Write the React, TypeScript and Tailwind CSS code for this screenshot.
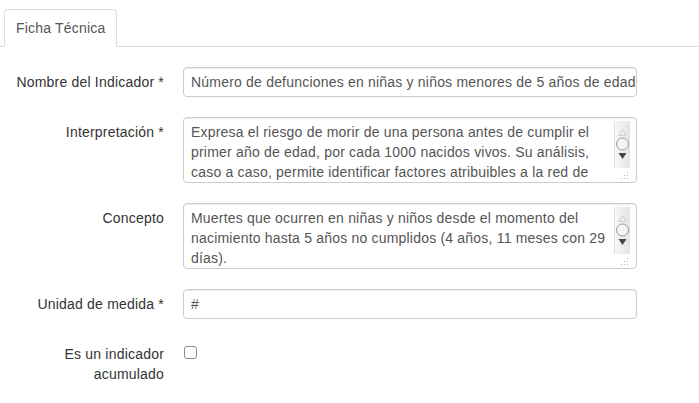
import type { ReactNode } from 'react'

const font = { fontFamily: '"Liberation Sans", Arial, sans-serif' }

function FakeScrollbar() {
  return (
    <>
      <div className="absolute top-[3px] right-[6px] w-[16px] h-[47px] border-l border-[#e2e2e2] border-r border-[#b9b9b9] bg-gradient-to-r from-[#f7f7f7] to-[#e6e6e6]">
        <svg width="15" height="47" viewBox="0 0 15 47" className="block">
          {/* up arrow (disabled) */}
          <path d="M3.5 14.5 L7.5 8.5 L11.5 14.5 Z" fill="#ececec" stroke="#cfcfcf" strokeWidth="1" />
          {/* thumb */}
          <circle cx="7.5" cy="23" r="6" fill="#f4f4f4" stroke="#9a9a9a" strokeWidth="1" />
          {/* down arrow */}
          <path d="M3.5 32 L11.5 32 L7.5 38 Z" fill="#444" />
        </svg>
      </div>
      <svg width="8" height="8" viewBox="0 0 8 8" className="absolute bottom-[2px] right-[7px]">
        <rect x="6" y="0" width="1" height="1" fill="#bbb" />
        <rect x="6" y="3" width="1" height="1" fill="#bbb" />
        <rect x="3" y="3" width="1" height="1" fill="#bbb" />
        <rect x="6" y="6" width="1" height="1" fill="#bbb" />
        <rect x="3" y="6" width="1" height="1" fill="#bbb" />
        <rect x="0" y="6" width="1" height="1" fill="#bbb" />
      </svg>
    </>
  )
}

function TextArea({ lines }: { lines: string[] }) {
  return (
    <div className="relative h-[66px] w-[454px] overflow-hidden rounded-[4px] border border-[#ccc] bg-white pl-[7px] pt-[4px] text-[#555] shadow-[inset_0_1px_1px_rgba(0,0,0,0.075)]">
      {lines.map((l) => (
        <div key={l} className="whitespace-nowrap leading-[20px]">{l}</div>
      ))}
      <FakeScrollbar />
    </div>
  )
}

function TextInput({ value }: { value: string }) {
  return (
    <div className="flex h-[30px] w-[454px] items-center overflow-hidden whitespace-nowrap rounded-[4px] border border-[#ccc] bg-white pl-[7px] pr-[6px] text-[#555] shadow-[inset_0_1px_1px_rgba(0,0,0,0.075)]">
      {value}
    </div>
  )
}

function Row({ label, children }: { label: ReactNode; children: ReactNode }) {
  return (
    <div className="flex">
      <label className="w-[164px] shrink-0 pt-[5px] text-right leading-[20px] text-[#333]">{label}</label>
      <div className="ml-[19px]">{children}</div>
    </div>
  )
}

export default function App() {
  return (
    <div className="h-[403px] w-[699px] overflow-hidden bg-white text-[14px] tracking-[0.2px]" style={font}>
      {/* Tabs */}
      <div className="flex border-b border-[#ddd] pl-[4px] pt-[9px]">
        <div className="-mb-px rounded-t-[4px] border border-[#ddd] border-b-transparent bg-white pl-[11px] pr-[10px] py-[8px] leading-[20px] text-[#555]">
          Ficha Técnica
        </div>
      </div>

      {/* Form */}
      <div className="flex flex-col gap-[20px] pt-[20px]">
        <Row label="Nombre del Indicador *">
          <TextInput value="Número de defunciones en niñas y niños menores de 5 años de edad" />
        </Row>
        <Row label="Interpretación *">
          <TextArea
            lines={[
              'Expresa el riesgo de morir de una persona antes de cumplir el',
              'primer año de edad, por cada 1000 nacidos vivos. Su análisis,',
              'caso a caso, permite identificar factores atribuibles a la red de',
            ]}
          />
        </Row>
        <Row label="Concepto">
          <TextArea
            lines={[
              'Muertes que ocurren en niñas y niños desde el momento del',
              'nacimiento hasta 5 años no cumplidos (4 años, 11 meses con 29',
              'días).',
            ]}
          />
        </Row>
        <Row label="Unidad de medida *">
          <TextInput value="#" />
        </Row>
        <Row
          label={
            <>
              Es un indicador
              <br />
              acumulado
            </>
          }
        >
          <div className="ml-[1px] mt-[7px] h-[13px] w-[13px] rounded-[3px] border border-[#8a8a8a] bg-white" />
        </Row>
      </div>
    </div>
  )
}
